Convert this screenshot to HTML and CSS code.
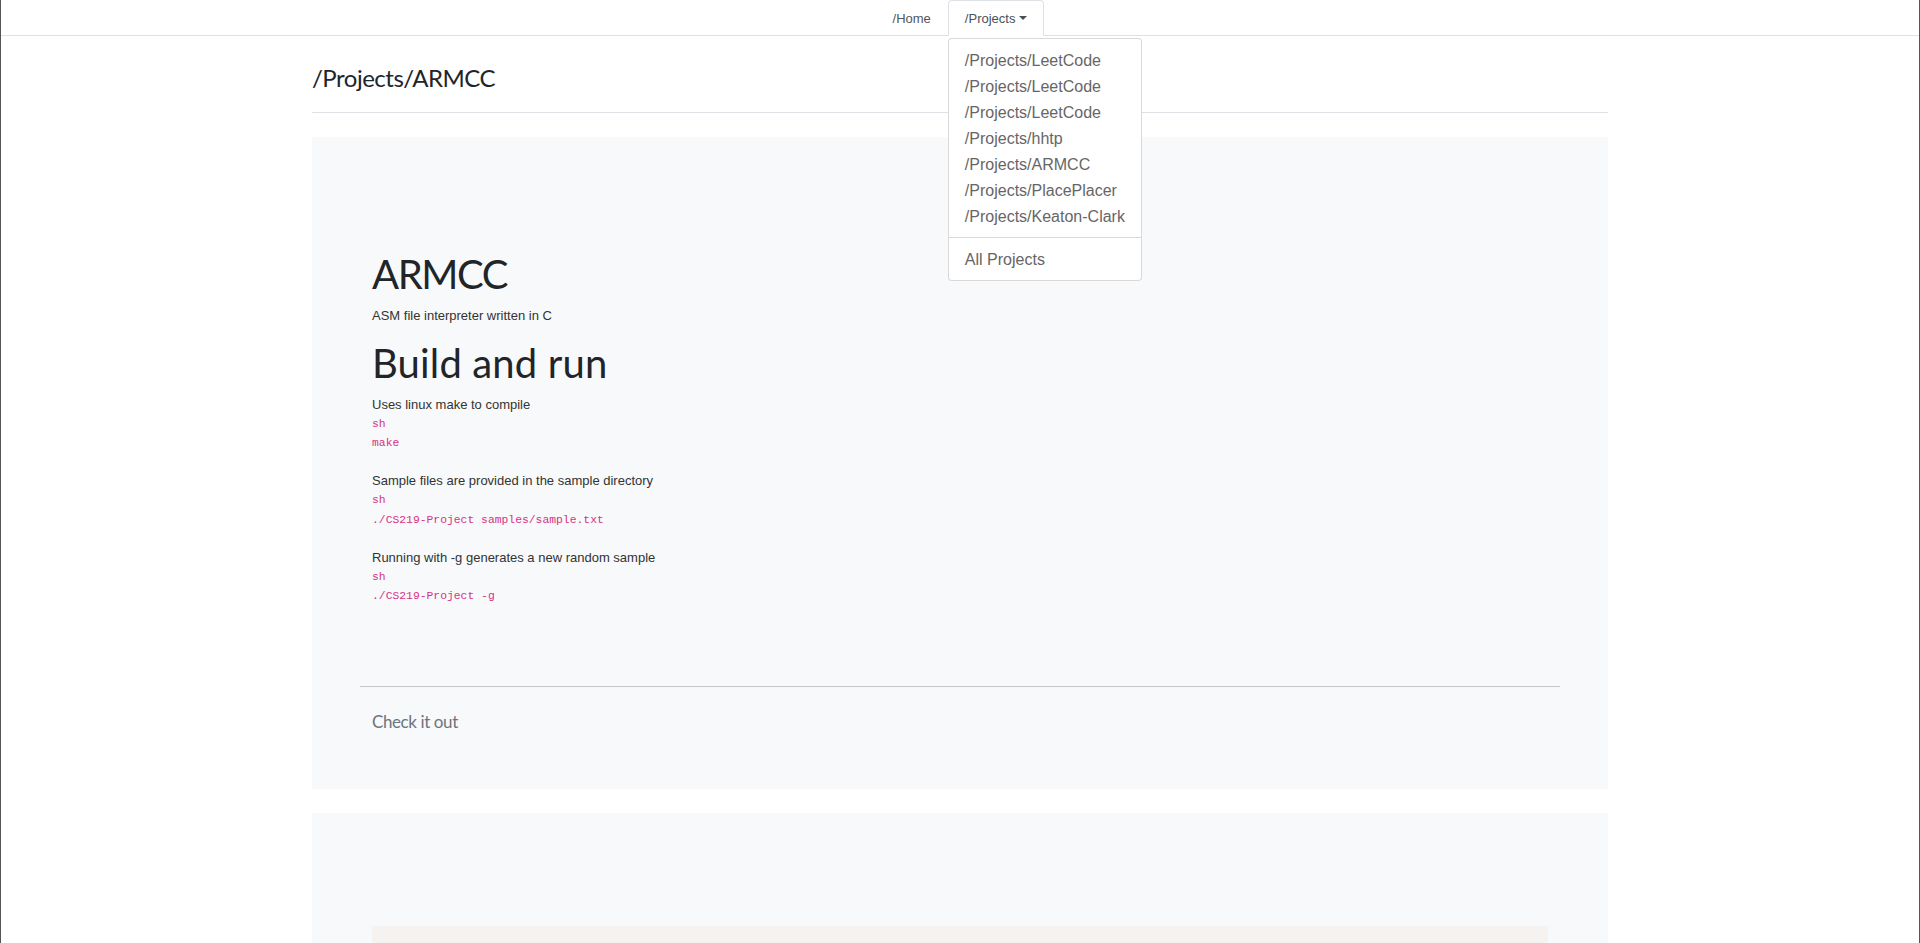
FILE: index.html
```html
<!DOCTYPE html>
<html lang="en">
<head>
<meta charset="utf-8">
<title>/Projects/ARMCC</title>
<link rel="stylesheet" href="styles.css">
</head>
<body>
<div class="page">
  <nav class="topnav">
    <ul class="tabs">
      <li class="tab-item"><a class="tab-link" href="#">/Home</a></li>
      <li class="tab-item dropdown">
        <a class="tab-link active" href="#">/Projects<span class="caret"></span></a>
        <div class="dropdown-menu">
          <a class="dropdown-item" href="#">/Projects/LeetCode</a>
          <a class="dropdown-item" href="#">/Projects/LeetCode</a>
          <a class="dropdown-item" href="#">/Projects/LeetCode</a>
          <a class="dropdown-item" href="#">/Projects/hhtp</a>
          <a class="dropdown-item" href="#">/Projects/ARMCC</a>
          <a class="dropdown-item" href="#">/Projects/PlacePlacer</a>
          <a class="dropdown-item" href="#">/Projects/Keaton-Clark</a>
          <div class="dropdown-divider"></div>
          <a class="dropdown-item" href="#">All Projects</a>
        </div>
      </li>
    </ul>
  </nav>

  <main class="container">
    <h2 class="page-title">/Projects/ARMCC</h2>
    <hr class="page-rule">

    <section class="card">
      <div class="md">
        <h1 class="md-h1 md-h1-title">ARMCC</h1>
        <p class="md-p">ASM file interpreter written in C</p>
        <h1 class="md-h1 md-h1-second">Build and run</h1>
        <div class="md-block">
          <p class="md-p">Uses linux make to compile</p>
          <div class="md-line"><code class="md-code">sh</code></div>
          <div class="md-line"><code class="md-code">make</code></div>
        </div>
        <div class="md-block">
          <p class="md-p">Sample files are provided in the sample directory</p>
          <div class="md-line"><code class="md-code">sh</code></div>
          <div class="md-line"><code class="md-code">./CS219-Project samples/sample.txt</code></div>
        </div>
        <div class="md-block md-block-last">
          <p class="md-p">Running with -g generates a new random sample</p>
          <div class="md-line"><code class="md-code">sh</code></div>
          <div class="md-line"><code class="md-code">./CS219-Project -g</code></div>
        </div>
      </div>
      <hr class="card-rule">
      <div class="cta"><a class="cta-link" href="#">Check it out</a></div>
    </section>

    <section class="card">
      <div class="md">
        <pre class="prism"><code><span class="tok-str">include</span> <span class="tok-fn">placeholder</span>  <span class="tok-str">build</span>
<span class="tok-kw">int</span> main() {
}</code></pre>
      </div>
    </section>
  </main>
</div>
</body>
</html>
```
FILE: styles.css
```css
* { box-sizing: border-box; }

html, body {
  margin: 0;
  padding: 0;
  background: #fff;
}

body {
  font-family: "Liberation Sans", Arial, sans-serif;
  color: #212529;
}

.page {
  min-height: 943px;
  border-left: 1px solid #555;
  border-right: 1px solid #555;
}

a { text-decoration: none; }

/* ---------- top navigation ---------- */
.topnav {
  border-bottom: 1px solid #dee2e6;
  height: 36px;
}

.tabs {
  list-style: none;
  margin: 0;
  padding: 0;
  display: flex;
  justify-content: center;
}

.tab-item {
  position: relative;
}

.tab-link {
  display: block;
  height: 36px;
  padding: 1px 16px 0;
  border: 1px solid transparent;
  border-radius: 4px 4px 0 0;
  font-size: 13px;
  line-height: 34px;
  color: #555;
  margin-bottom: -1px;
}

.tab-link.active {
  background: #fff;
  border-color: #dee2e6 #dee2e6 #fff;
  color: #495057;
}

.caret {
  display: inline-block;
  margin-left: 4px;
  vertical-align: 3px;
  border-top: 4px solid currentColor;
  border-left: 4px solid transparent;
  border-right: 4px solid transparent;
}

.dropdown-menu {
  position: absolute;
  top: 38px;
  left: 0;
  z-index: 10;
  background: #fff;
  border: 1px solid rgba(0, 0, 0, 0.15);
  border-radius: 4px;
  padding: 8px 0;
  white-space: nowrap;
}

.dropdown-item {
  display: block;
  height: 26px;
  padding: 1px 16px 0;
  font-size: 16px;
  line-height: 25px;
  color: #666;
}

.dropdown-divider {
  border-top: 1px solid #d9d9d9;
  margin: 8px 0;
}

/* ---------- page ---------- */
.container {
  width: 1296px;
  margin: 0 auto;
}

.page-title {
  margin: 28px 0 0;
  font-family: Lato, "Open Sans", sans-serif;
  font-weight: 400;
  font-size: 24px;
  line-height: 1.2;
  letter-spacing: -0.5px;
  color: #212529;
}

.page-rule {
  margin: 19.5px 0 23.5px;
  border: 0;
  border-top: 1px solid #dee2e6;
}

.card {
  background: #f8f9fa;
  padding: 48px;
  margin-bottom: 24px;
}

.md {
  padding: 65px 12px 0;
}

.md-h1 {
  margin: 0 0 8px;
  font-family: Lato, "Open Sans", sans-serif;
  font-weight: 400;
  font-size: 40px;
  line-height: 48px;
  color: #212529;
}

.md-h1-title {
  letter-spacing: -1.4px;
}

.md-h1-second {
  margin-top: 13.5px;
  letter-spacing: 0.15px;
}

.md-p {
  margin: 0;
  font-size: 13px;
  line-height: 19.2px;
  color: #333;
}

.md-block {
  margin-bottom: 19.2px;
}

.md-block-last {
  margin-bottom: 0;
}

.md-line {
  height: 19.2px;
  font-family: "Liberation Mono", "Courier New", monospace;
  font-size: 11.375px;
  line-height: 19.2px;
}

.md-code {
  font-family: "Liberation Mono", "Courier New", monospace;
  font-size: 11.375px;
  vertical-align: -1px;
  color: #d63384;
}

.card-rule {
  margin: 80px 0 0;
  border: 0;
  border-top: 1px solid #c4c6c8;
}

.cta {
  padding: 20px 12px 4px;
}

.cta-link {
  font-family: Lato, "Open Sans", sans-serif;
  font-size: 17px;
  line-height: 30px;
  letter-spacing: -0.4px;
  color: #6c757d;
}

/* ---------- prism code block ---------- */
.prism {
  margin: 0;
  padding: 16px;
  background: #f5f2f0;
  font-family: "Liberation Mono", "Courier New", monospace;
  font-size: 16px;
  line-height: 1.5;
  color: #000;
}

.tok-str { color: #690; }
.tok-fn { color: #4d7a00; }
.tok-kw { color: #07a; }
```
